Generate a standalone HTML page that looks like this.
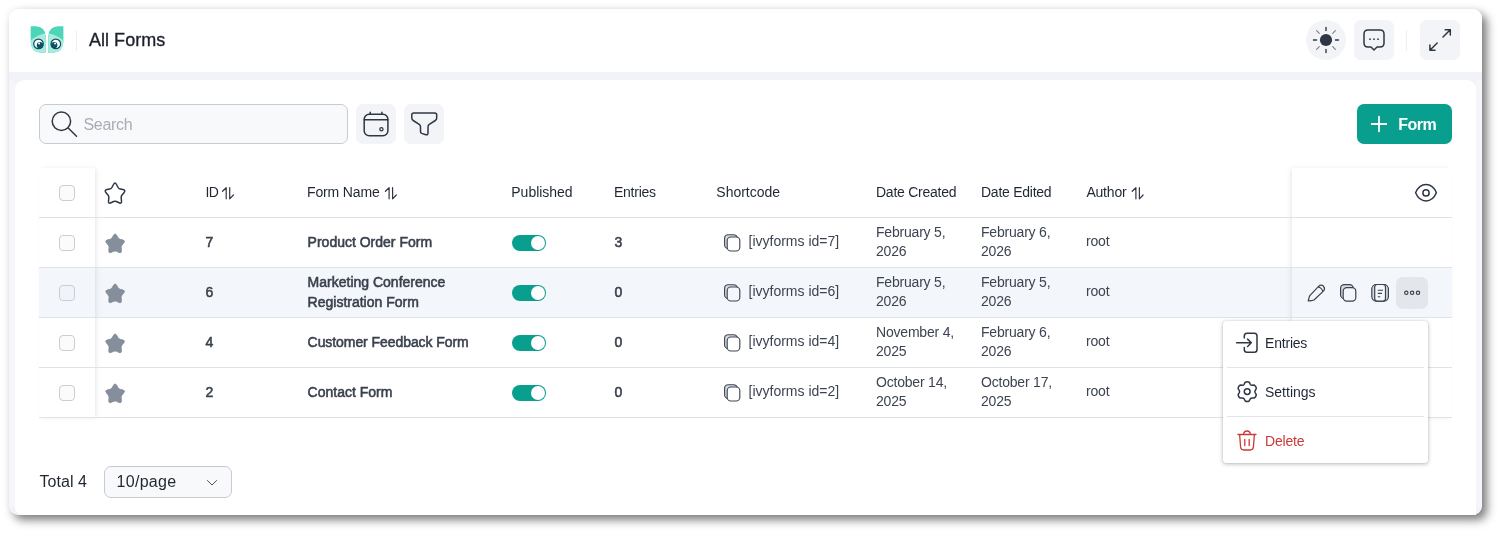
<!DOCTYPE html>
<html lang="en">
<head>
<meta charset="utf-8">
<title>All Forms</title>
<style>
*{box-sizing:border-box;margin:0;padding:0}
html,body{width:1503px;height:536px;background:#fff;overflow:hidden}
body{font-family:"Liberation Sans",sans-serif;color:#1f2733;position:relative;will-change:transform}
.abs{position:absolute}
#wrap{left:9px;top:9px;width:1473px;height:506px;background:#f2f3f8;border-radius:9px;box-shadow:5px 5px 10px 0 rgba(0,0,0,.5),0 0 8px rgba(0,0,0,.05)}
#hdr{left:9px;top:9px;width:1473px;height:63px;background:#fff;border-radius:9px 9px 0 0}
#card{left:15px;top:80px;width:1461px;height:435px;background:#fff;border-radius:9px 9px 0 8px}
.title{left:89px;top:29px;font-size:18px;line-height:22px;color:#1c222d;letter-spacing:.03px;-webkit-text-stroke:.35px #1c222d}
.vsep{width:1px;background:#eceef2}
.ibtn{background:#f3f4f8;border-radius:7px}
.search{left:39px;top:104px;width:309px;height:40px;border:1px solid #c6cad1;border-radius:7px;background:#f8f9fb}
.search span{position:absolute;left:43.5px;top:10px;font-size:16px;line-height:20px;color:#a7acb6;letter-spacing:-.3px}
.addbtn{left:1357px;top:104px;width:95px;height:40px;border-radius:7px;background:#089f8e;color:#fff}
.addbtn span{position:absolute;left:41.3px;top:11px;font-size:16px;line-height:20px;font-weight:700;letter-spacing:-.5px}
.hl{height:1px;background:#dfe2e7;left:39px;width:1413px}
.rowbg{left:39px;width:1413px;height:49px;top:268px;background:#f3f6fa}
.th{font-size:14px;line-height:18px;color:#1f2733;white-space:nowrap;letter-spacing:-.25px}
.td{font-size:14px;line-height:20px;color:#3d4451;white-space:nowrap;letter-spacing:-.2px}
.dt{line-height:19px}
.sc{letter-spacing:0}
.b{color:#3a414e;letter-spacing:0;-webkit-text-stroke:.55px #3a414e}
.cb{width:16px;height:16px;border:1px solid #c9cdd4;border-radius:4px;background:#fbfbfc;left:59px}
.tog{width:34px;height:16px;border-radius:8px;background:#089f8e;left:512px}
.tog i{position:absolute;right:1px;top:1px;width:14px;height:14px;border-radius:50%;background:#fff}
.fixl{left:39px;top:168px;width:56px;height:250px;box-shadow:2px 0 5px -1px rgba(0,0,0,.10)}
.fixr{left:1292px;top:168px;width:160px;height:250px;box-shadow:-2px 0 5px -1px rgba(0,0,0,.10)}
.menu{left:1223px;top:321px;width:205px;height:142px;background:#fff;border-radius:3px;box-shadow:0 1px 4px rgba(0,0,0,.28),0 0 1px rgba(0,0,0,.2)}
.mi{left:1265px;font-size:14px;line-height:18px;color:#1f2733;letter-spacing:-.2px}
.msep{left:1227px;width:197px;height:1px;background:#e1e4e8}
.sel{left:104px;top:466px;width:128px;height:32px;border:1px solid #c7cad0;border-radius:7px;background:#f8f9fb}
.sel span{position:absolute;left:11.5px;top:6px;font-size:16px;line-height:18px;color:#1f2733;letter-spacing:.3px}
svg{position:absolute;overflow:visible}
</style>
</head>
<body>
<div id="wrap" class="abs"></div>
<div id="hdr" class="abs"></div>
<div class="abs" style="left:9px;top:80px;width:6px;height:427px;background:#f5f6fa"></div>
<div class="abs" style="left:1476px;top:80px;width:6px;height:427px;background:#f5f6fa"></div>
<div id="card" class="abs"></div>

<!-- HEADER -->
<div class="abs vsep" style="left:75.5px;top:30px;height:21px"></div>
<div class="abs title">All Forms</div>
<div class="abs ibtn" style="left:1306px;top:20px;width:40px;height:40px;border-radius:20px"></div>
<div class="abs ibtn" style="left:1354px;top:20px;width:40px;height:40px"></div>
<div class="abs vsep" style="left:1406px;top:30px;height:21px"></div>
<div class="abs ibtn" style="left:1420px;top:20px;width:40px;height:40px"></div>

<!-- TOOLBAR -->
<div class="abs search"><span>Search</span></div>
<div class="abs ibtn" style="left:356px;top:104px;width:40px;height:40px"></div>
<div class="abs ibtn" style="left:404px;top:104px;width:40px;height:40px"></div>
<div class="abs addbtn"><span>Form</span></div>

<!-- TABLE -->
<div class="abs rowbg"></div>
<div class="abs fixl"></div>
<div class="abs fixr"></div>
<div class="abs hl" style="top:217px"></div>
<div class="abs hl" style="top:267px"></div>
<div class="abs hl" style="top:317px"></div>
<div class="abs hl" style="top:367px"></div>
<div class="abs hl" style="top:417px"></div>

<div class="abs th" style="left:205.4px;top:183px;letter-spacing:-.6px">ID</div>
<div class="abs th" style="left:307px;top:183px;letter-spacing:-.15px">Form Name</div>
<div class="abs th" style="left:511.3px;top:183px;letter-spacing:-.02px">Published</div>
<div class="abs th" style="left:614px;top:183px">Entries</div>
<div class="abs th" style="left:716.3px;top:183px;letter-spacing:0">Shortcode</div>
<div class="abs th" style="left:876px;top:183px">Date Created</div>
<div class="abs th" style="left:981px;top:183px">Date Edited</div>
<div class="abs th" style="left:1086.4px;top:183px;letter-spacing:-.2px">Author</div>

<div class="abs cb" style="top:185px"></div>
<div class="abs cb" style="top:235px"></div>
<div class="abs cb" style="top:285px;background:#f1f3fa"></div>
<div class="abs cb" style="top:335px"></div>
<div class="abs cb" style="top:385px"></div>

<!-- row 1 -->
<div class="abs td b" style="left:205.6px;top:232px">7</div>
<div class="abs td b" style="left:307.6px;top:232px">Product Order Form</div>
<div class="abs tog" style="top:235px"><i></i></div>
<div class="abs td b" style="left:614.4px;top:232px">3</div>
<div class="abs td sc" style="left:748.5px;top:231px">[ivyforms id=7]</div>
<div class="abs td dt" style="left:876px;top:223px">February 5,<br>2026</div>
<div class="abs td dt" style="left:981px;top:223px">February 6,<br>2026</div>
<div class="abs td" style="left:1086px;top:231px">root</div>
<!-- row 2 -->
<div class="abs td b" style="left:205.6px;top:282px">6</div>
<div class="abs td b" style="left:307.6px;top:272px">Marketing Conference<br>Registration Form</div>
<div class="abs tog" style="top:285px"><i></i></div>
<div class="abs td b" style="left:614.4px;top:282px">0</div>
<div class="abs td sc" style="left:748.5px;top:281px">[ivyforms id=6]</div>
<div class="abs td dt" style="left:876px;top:273px">February 5,<br>2026</div>
<div class="abs td dt" style="left:981px;top:273px">February 5,<br>2026</div>
<div class="abs td" style="left:1086px;top:281px">root</div>
<!-- row 3 -->
<div class="abs td b" style="left:205.6px;top:332px">4</div>
<div class="abs td b" style="left:307.6px;top:332px;letter-spacing:-.07px">Customer Feedback Form</div>
<div class="abs tog" style="top:335px"><i></i></div>
<div class="abs td b" style="left:614.4px;top:332px">0</div>
<div class="abs td sc" style="left:748.5px;top:331px">[ivyforms id=4]</div>
<div class="abs td dt" style="left:876px;top:323px">November 4,<br>2025</div>
<div class="abs td dt" style="left:981px;top:323px">February 6,<br>2026</div>
<div class="abs td" style="left:1086px;top:331px">root</div>
<!-- row 4 -->
<div class="abs td b" style="left:205.6px;top:382px">2</div>
<div class="abs td b" style="left:307.6px;top:382px">Contact Form</div>
<div class="abs tog" style="top:385px"><i></i></div>
<div class="abs td b" style="left:614.4px;top:382px">0</div>
<div class="abs td sc" style="left:748.5px;top:381px">[ivyforms id=2]</div>
<div class="abs td dt" style="left:876px;top:373px">October 14,<br>2025</div>
<div class="abs td dt" style="left:981px;top:373px">October 17,<br>2025</div>
<div class="abs td" style="left:1086px;top:381px">root</div>

<!-- row actions -->
<div class="abs" style="left:1396px;top:277px;width:32px;height:32px;border-radius:7px;background:#e3e6eb"></div>

<!-- FOOTER -->
<div class="abs" style="left:39.4px;top:472px;font-size:16px;line-height:20px;color:#1f2733;letter-spacing:.08px">Total 4</div>
<div class="abs sel"><span>10/page</span></div>

<!-- MENU -->
<div class="abs menu"></div>
<div class="abs msep" style="top:367px"></div>
<div class="abs msep" style="top:416px"></div>
<div class="abs mi" style="top:334px">Entries</div>
<div class="abs mi" style="top:383px;letter-spacing:0">Settings</div>
<div class="abs mi" style="top:432px;color:#c93a36">Delete</div>

<!-- ICONS -->
<svg class="abs" style="left:0;top:0" width="1503" height="536" viewBox="0 0 1503 536" fill="none" stroke-linecap="round" stroke-linejoin="round">
<!-- logo -->
<defs>
<clipPath id="lfL"><path d="M30.7 26.2 H36 Q45.7 27 45.7 36.5 V52.8 H41 Q31 52 30.7 42 Z"/></clipPath>
<clipPath id="lfR"><path d="M63.4 26.2 H58 Q48.2 27 48.2 36.5 V52.8 H53 Q63 52 63.4 42 Z"/></clipPath>
</defs>
<g stroke="none">
<path d="M30.7 26.2 H36 Q45.7 27 45.7 36.5 V52.8 H41 Q31 52 30.7 42 Z" fill="#4dd5b8"/>
<path d="M30.7 40.2Q38 34.6 45.7 33.2V52.8H30.7Z" fill="#a9ebdd" clip-path="url(#lfL)"/>
<path d="M63.4 26.2 H58 Q48.2 27 48.2 36.5 V52.8 H53 Q63 52 63.4 42 Z" fill="#4dd5b8"/>
<path d="M63.4 40.2Q56.1 34.6 48.2 33.2V52.8H63.4Z" fill="#a9ebdd" clip-path="url(#lfR)"/>
<circle cx="38.5" cy="43.9" r="5.4" fill="#0d4f66"/>
<circle cx="38.5" cy="43.9" r="4.2" fill="#fff"/>
<circle cx="40" cy="45.2" r="3.2" fill="#0d4f66"/>
<circle cx="39.1" cy="43.6" r="1" fill="#fff"/>
<circle cx="55.8" cy="43.9" r="5.4" fill="#0d4f66"/>
<circle cx="55.8" cy="43.9" r="4.2" fill="#fff"/>
<circle cx="54.2" cy="45.1" r="3.2" fill="#0d4f66"/>
<circle cx="55.1" cy="43.6" r="1" fill="#fff"/>
</g>
<!-- sun -->
<g stroke="#2f3744" stroke-width="1.4">
<circle cx="1326" cy="40" r="6.1" fill="#2f3744" stroke="none"/>
<path d="M1326 27.5V30.5M1326 49.5V52.5M1313.5 40H1316.5M1335.5 40H1338.5"/>
<path d="M1316.6 30.6L1319.3 33.3M1332.7 46.7L1335.4 49.4M1335.4 30.6L1332.7 33.3M1319.3 46.7L1316.6 49.4" stroke="#7d838d" stroke-width="1.2"/>
</g>
<!-- chat -->
<g stroke="#2f3744" stroke-width="1.5">
<path d="M1368 30H1380Q1384 30 1384 34V43Q1384 47 1380 47H1377L1374 50L1371 47H1368Q1364 47 1364 43V34Q1364 30 1368 30Z"/>
<g fill="#2f3744" stroke="none"><circle cx="1370" cy="39.2" r=".85"/><circle cx="1374" cy="39.2" r=".85"/><circle cx="1378" cy="39.2" r=".85"/></g>
</g>
<!-- expand -->
<g stroke="#2f3744" stroke-width="1.5">
<path d="M1443 37L1450.3 29.8M1445.2 29.8H1450.3V34.9"/>
<path d="M1437.2 43L1429.9 50.2M1435 50.2H1429.9V45.1"/>
</g>
<!-- search -->
<g stroke="#2f3744" stroke-width="1.5">
<circle cx="61.4" cy="121.3" r="9.2"/>
<path d="M68.2 128L76.5 136.2"/>
</g>
<!-- calendar -->
<g stroke="#2f3744" stroke-width="1.5">
<rect x="364.2" y="114.2" width="23.7" height="21.5" rx="5"/>
<path d="M370.2 112.3V114M381.9 112.3V114M364.2 119.7H387.9"/>
<circle cx="381.4" cy="129.3" r="1.6" stroke-width="1.3"/>
</g>
<!-- filter -->
<path stroke="#2f3744" stroke-width="1.5" d="M413.8 113H434.7Q436.7 113 436.7 115V118Q436.7 119.6 435.3 120.5L429.3 124.3Q428 125.2 428 126.8V133Q428 135.3 425.8 134.7L421.8 133.4Q420.5 132.9 420.5 131.4V126.8Q420.5 125.2 419.2 124.3L413.2 120.5Q411.8 119.6 411.8 118V115Q411.8 113 413.8 113Z"/>
<!-- plus -->
<path stroke="#fff" stroke-width="1.8" d="M1379 116.7V131.3M1371.7 124H1386.3"/>
<!-- header star -->
<path id="st" stroke="#2f3744" stroke-width="1.5" d="M113.50 184.51Q115.00 181.69 116.50 184.51L117.95 187.23Q118.70 188.65 120.27 188.99L122.91 189.57Q126.03 190.26 123.96 192.70L122.03 194.96Q120.99 196.18 121.16 197.77L121.49 200.96Q121.82 204.14 118.94 202.75L116.44 201.54Q115.00 200.84 113.56 201.54L111.06 202.75Q108.18 204.14 108.51 200.96L108.84 197.77Q109.01 196.18 107.97 194.96L106.04 192.70Q103.97 190.26 107.09 189.57L109.73 188.99Q111.30 188.65 112.05 187.23Z"/>
<!-- sort icons -->
<g id="so" stroke="#2f3744" stroke-width="1.2">
<path d="M226.2 198.8V187.7L222.5 191.3M229.7 187.7V198.8L233.4 195"/>
</g>
<use href="#so" x="162.9"/>
<use href="#so" x="909.7"/>
<!-- eye -->
<g stroke="#2f3744" stroke-width="1.5">
<path d="M1415.6 192.8C1417.8 187.6 1421.4 184.6 1426 184.6C1430.6 184.6 1434.2 187.6 1436.4 192.8C1434.2 198 1430.6 201 1426 201C1421.4 201 1417.8 198 1415.6 192.8Z"/>
<circle cx="1426" cy="192.9" r="3.1"/>
</g>
<!-- filled stars -->
<g fill="#858e9b" stroke="#858e9b" stroke-width="1" stroke-linejoin="round">
<path id="fs" d="M113.48 235.44Q115.10 232.45 116.72 235.44L117.88 237.57Q118.69 239.07 120.35 239.42L122.52 239.87Q125.85 240.57 123.59 243.12L122.03 244.89Q120.90 246.16 121.09 247.85L121.37 250.33Q121.74 253.71 118.67 252.25L116.63 251.28Q115.10 250.54 113.57 251.28L111.53 252.25Q108.46 253.71 108.83 250.33L109.11 247.85Q109.30 246.16 108.17 244.89L106.61 243.12Q104.35 240.57 107.68 239.87L109.85 239.42Q111.51 239.07 112.32 237.57Z"/>
<use href="#fs" y="50"/><use href="#fs" y="100"/><use href="#fs" y="150"/>
</g>
<!-- copy icons -->
<g id="cp" stroke="#3f4655" stroke-width="1.15">
<rect x="724.6" y="234.7" width="12.6" height="13.8" rx="3.6" fill="#d6dae1"/>
<rect x="727.2" y="237" width="12.6" height="14" rx="3.6" fill="#fff"/>
</g>
<g stroke="#3f4655" stroke-width="1.15"><rect x="724.6" y="284.7" width="12.6" height="13.8" rx="3.6" fill="#d6dae1"/><rect x="727.2" y="287" width="12.6" height="14" rx="3.6" fill="#f3f6fa"/></g><use href="#cp" y="100"/><use href="#cp" y="150"/>
<!-- row actions -->
<g stroke="#3a4150" stroke-width="1.2">
<path d="M1308.2 300.8L1309.6 295.8L1318.8 286.2Q1321.2 284.2 1323.5 286.3Q1325.5 288.6 1323.6 290.9L1314 300Q1310.8 301 1308.2 300.8ZM1318.2 287Q1321.6 287.4 1322.8 291.4"/>
<rect x="1340.6" y="284.7" width="12.6" height="13.8" rx="3.6" fill="#d6dae1"/>
<rect x="1343.2" y="287.6" width="12.6" height="13.6" rx="3.6" fill="#f3f6fa"/>
<rect x="1371.8" y="284.5" width="16.6" height="16.6" rx="4.5" fill="#d6dae1"/>
<rect x="1374.7" y="284.5" width="10.8" height="16.6" rx="2.5" fill="#f3f6fa"/>
<path d="M1377.8 290.2H1383M1377.8 293.4H1382M1377.8 296.8H1380.2" stroke-width="1.1" stroke-linecap="butt"/>
<circle cx="1406.3" cy="292.8" r="1.7" stroke-width="1.1"/>
<circle cx="1412.1" cy="292.8" r="1.7" stroke-width="1.1"/>
<circle cx="1418" cy="292.8" r="1.7" stroke-width="1.1"/>
</g>
<!-- menu icons -->
<g stroke="#2f3744" stroke-width="1.5">
<path d="M1244.3 338V336Q1244.3 333.2 1247 333.2H1254.3Q1257 333.2 1257 336V349.5Q1257 352.3 1254.3 352.3H1247Q1244.3 352.3 1244.3 349.5V347.5"/>
<path d="M1236.6 342.8H1251.3M1247.6 339.1L1251.3 342.8L1247.6 346.5"/>
<path d="M1245.2 382.2Q1247.2 381.3 1249.2 382.2L1250.3 384.3Q1250.9 385.2 1252 385.2L1254.3 385.1Q1256.3 386.4 1256.3 388.6L1255.1 390.6Q1254.6 391.6 1255.1 392.6L1256.3 394.6Q1256.3 396.8 1254.3 398.1L1252 398Q1250.9 398 1250.3 398.9L1249.2 401Q1247.2 401.9 1245.2 401L1244.1 398.9Q1243.5 398 1242.4 398L1240.1 398.1Q1238.1 396.8 1238.1 394.6L1239.3 392.6Q1239.8 391.6 1239.3 390.6L1238.1 388.6Q1238.1 386.4 1240.1 385.1L1242.4 385.2Q1243.5 385.2 1244.1 384.3Z"/>
<circle cx="1247.2" cy="391.6" r="2.9"/>
</g>
<g stroke="#c93a36" stroke-width="1.3">
<path d="M1238 434.5H1256M1243.6 434.5Q1243.8 431 1247 431Q1250.2 431 1250.4 434.5M1239.6 434.5L1240.6 447Q1240.9 450 1243.8 450H1250.2Q1253.1 450 1253.4 447L1254.4 434.5M1244.8 439.5V445.5M1249.2 439.5V445.5"/>
</g>
<!-- chevron -->
<path stroke="#4a5160" stroke-width="1" d="M207.4 480.5L212 485L216.6 480.5"/>
</svg>
</body>
</html>
